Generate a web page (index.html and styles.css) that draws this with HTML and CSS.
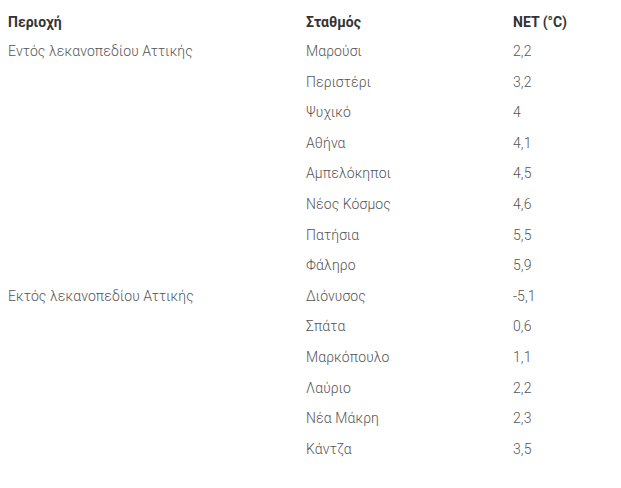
FILE: index.html
```html
<!DOCTYPE html>
<html lang="el">
<head>
<meta charset="utf-8">
<link rel="stylesheet" href="styles.css">
</head>
<body>
<table class="net-table">
  <colgroup>
    <col class="c-area"><col class="c-station"><col class="c-net">
  </colgroup>
  <thead>
    <tr><th>Περιοχή</th><th>Σταθμός</th><th>NET (°C)</th></tr>
  </thead>
  <tbody>
    <tr><td>Εντός λεκανοπεδίου Αττικής</td><td>Μαρούσι</td><td>2,2</td></tr>
    <tr><td></td><td>Περιστέρι</td><td>3,2</td></tr>
    <tr><td></td><td>Ψυχικό</td><td>4</td></tr>
    <tr><td></td><td>Αθήνα</td><td>4,1</td></tr>
    <tr><td></td><td>Αμπελόκηποι</td><td>4,5</td></tr>
    <tr><td></td><td>Νέος Κόσμος</td><td>4,6</td></tr>
    <tr><td></td><td>Πατήσια</td><td>5,5</td></tr>
    <tr><td></td><td>Φάληρο</td><td>5,9</td></tr>
    <tr><td>Εκτός λεκανοπεδίου Αττικής</td><td>Διόνυσος</td><td>-5,1</td></tr>
    <tr><td></td><td>Σπάτα</td><td>0,6</td></tr>
    <tr><td></td><td>Μαρκόπουλο</td><td>1,1</td></tr>
    <tr><td></td><td>Λαύριο</td><td>2,2</td></tr>
    <tr><td></td><td>Νέα Μάκρη</td><td>2,3</td></tr>
    <tr><td></td><td>Κάντζα</td><td>3,5</td></tr>
  </tbody>
</table>
</body>
</html>
```
FILE: styles.css
```css
html, body {
  background: #fff;
}
body {
  margin: 8px;
  font-family: Roboto, "Noto Sans", sans-serif;
  font-size: 14px;
}
.net-table {
  border-collapse: collapse;
  table-layout: fixed;
  width: 605px;
}
.c-area { width: 298px; }
.c-station { width: 207px; }
.c-net { width: 100px; }
.net-table th {
  text-align: left;
  font-weight: 700;
  color: #333;
  padding: 4px 0 4px;
  line-height: 20px;
}
.net-table td {
  font-weight: 300;
  color: #555;
  padding: 5px 0;
  line-height: 20.6px;
  letter-spacing: 0.1px;
  vertical-align: top;
}
```
